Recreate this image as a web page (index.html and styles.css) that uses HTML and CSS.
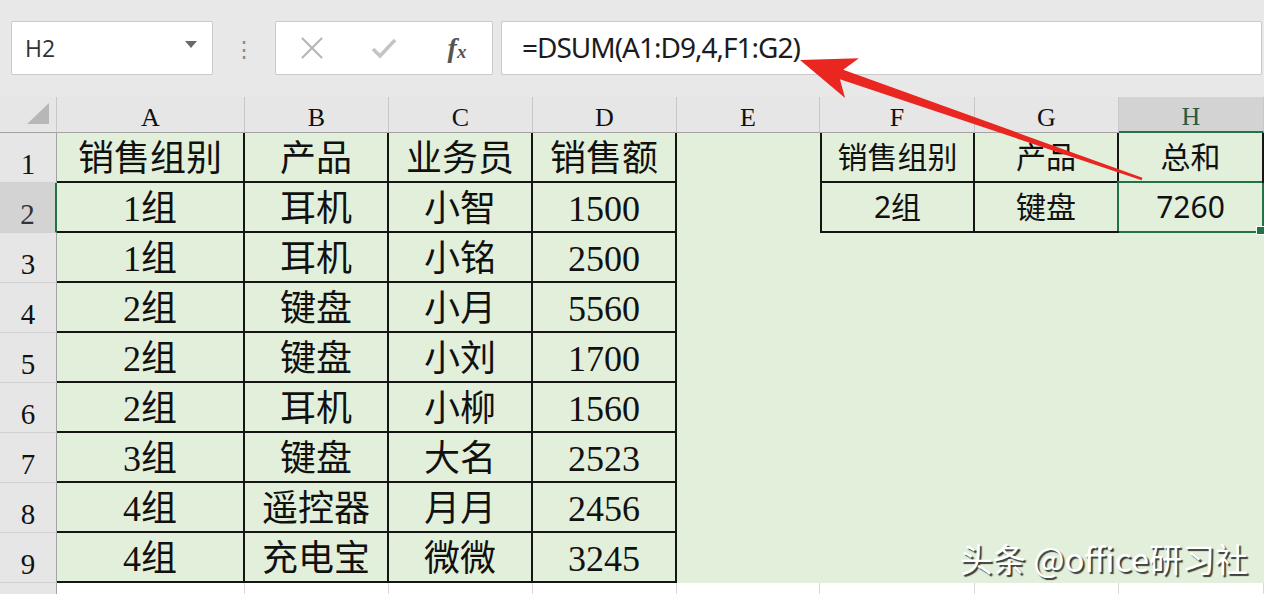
FILE: index.html
```html
<!DOCTYPE html>
<html lang="zh-CN">
<head>
  <meta charset="UTF-8">
  <title>DSUM</title>
  <link rel="stylesheet" href="styles.css">
</head>
<body>
  <div class="toolbar">
    <div class="namebox">
      <span>H2</span>
      <svg class="drop" width="12" height="8" viewBox="0 0 12 8"><polygon points="0,0 12,0 6,7" fill="#6a6a6a"/></svg>
    </div>
    <div class="grip">&#8942;</div>
    <div class="fxbox">
      <div class="slot">
        <svg width="24" height="24" viewBox="0 0 24 24"><path d="M2 2 L22 22 M22 2 L2 22" stroke="#b3b3b3" stroke-width="2" fill="none"/></svg>
      </div>
      <div class="slot">
        <svg width="26" height="22" viewBox="0 0 26 22"><path d="M2 12 L9 19 L24 3" stroke="#c4c4c4" stroke-width="3.5" fill="none"/></svg>
      </div>
      <div class="slot fx"><i>f</i><i class="x">x</i></div>
    </div>
    <div class="formula">=DSUM(A1:D9,4,F1:G2)</div>
  </div>

  <div class="sheet">
    <div class="corner"><svg width="22" height="22" viewBox="0 0 22 22"><polygon points="22,0 22,21 0,21" fill="#b7b7b7"/></svg></div>
    <div class="hd">A</div>
    <div class="hd">B</div>
    <div class="hd">C</div>
    <div class="hd">D</div>
    <div class="hd">E</div>
    <div class="hd">F</div>
    <div class="hd">G</div>
    <div class="hd hl">H</div>

    <div class="rn">1</div>
    <div class="g tb">销售组别</div>
    <div class="g tb">产品</div>
    <div class="g tb">业务员</div>
    <div class="g tb">销售额</div>
    <div class="g"></div>
    <div class="g tb f tl">销售组别</div>
    <div class="g tb f">产品</div>
    <div class="g tb f">总和</div>

    <div class="rn hl">2</div>
    <div class="g tb">1组</div>
    <div class="g tb">耳机</div>
    <div class="g tb">小智</div>
    <div class="g tb">1500</div>
    <div class="g"></div>
    <div class="g tb f tl">2组</div>
    <div class="g tb f">键盘</div>
    <div class="g tb f sel">7260</div>

    <div class="rn">3</div>
    <div class="g tb">1组</div>
    <div class="g tb">耳机</div>
    <div class="g tb">小铭</div>
    <div class="g tb">2500</div>
    <div class="g"></div><div class="g"></div><div class="g"></div><div class="g"></div>

    <div class="rn">4</div>
    <div class="g tb">2组</div>
    <div class="g tb">键盘</div>
    <div class="g tb">小月</div>
    <div class="g tb">5560</div>
    <div class="g"></div><div class="g"></div><div class="g"></div><div class="g"></div>

    <div class="rn">5</div>
    <div class="g tb">2组</div>
    <div class="g tb">键盘</div>
    <div class="g tb">小刘</div>
    <div class="g tb">1700</div>
    <div class="g"></div><div class="g"></div><div class="g"></div><div class="g"></div>

    <div class="rn">6</div>
    <div class="g tb">2组</div>
    <div class="g tb">耳机</div>
    <div class="g tb">小柳</div>
    <div class="g tb">1560</div>
    <div class="g"></div><div class="g"></div><div class="g"></div><div class="g"></div>

    <div class="rn">7</div>
    <div class="g tb">3组</div>
    <div class="g tb">键盘</div>
    <div class="g tb">大名</div>
    <div class="g tb">2523</div>
    <div class="g"></div><div class="g"></div><div class="g"></div><div class="g"></div>

    <div class="rn">8</div>
    <div class="g tb">4组</div>
    <div class="g tb">遥控器</div>
    <div class="g tb">月月</div>
    <div class="g tb">2456</div>
    <div class="g"></div><div class="g"></div><div class="g"></div><div class="g"></div>

    <div class="rn">9</div>
    <div class="g tb">4组</div>
    <div class="g tb">充电宝</div>
    <div class="g tb">微微</div>
    <div class="g tb">3245</div>
    <div class="g"></div><div class="g"></div><div class="g"></div><div class="g"></div>

    <div class="rn"></div>
    <div class="blank"></div><div class="blank"></div><div class="blank"></div><div class="blank"></div>
    <div class="blank"></div><div class="blank"></div><div class="blank"></div><div class="blank"></div>
  </div>

  <svg class="arrow" width="1264" height="594" viewBox="0 0 1264 594">
    <polygon fill="#e9261f" points="800,60 858.9,58.2 843.2,69.7 1142.4,177.8 1141.6,180.2 839.9,79.2 845.1,97.9"/>
  </svg>

  <div class="watermark">头条 @office研习社</div>
</body>
</html>
```

FILE: styles.css
```css
* {
  box-sizing: border-box;
}
body {
  margin: 0;
  width: 1264px;
  height: 594px;
  overflow: hidden;
  position: relative;
  background: #e8e8e8;
  font-family: "Noto Sans", "Noto Sans CJK SC", sans-serif;
  color: #111;
}
.toolbar {
  height: 97px;
  display: flex;
  align-items: flex-start;
  padding: 21px 0 0 11px;
}
.namebox {
  width: 202px;
  height: 54px;
  background: #fff;
  border: 1px solid #c9c9c9;
  border-radius: 2px;
  display: flex;
  align-items: center;
  justify-content: space-between;
  padding: 0 15px 0 13px;
  font-family: "Open Sans", sans-serif;
  font-size: 23px;
  color: #333;
}
.drop {
  margin-top: -6px;
}
.grip {
  width: 62px;
  text-align: center;
  line-height: 54px;
  font-size: 22px;
  color: #8a8a8a;
}
.fxbox {
  width: 218px;
  height: 54px;
  background: #fff;
  border: 1px solid #c9c9c9;
  border-radius: 2px;
  display: flex;
}
.slot {
  width: 72px;
  display: flex;
  align-items: center;
  justify-content: center;
}
.fx {
  font-family: "Liberation Serif", serif;
  font-size: 28px;
  font-weight: bold;
  color: #555;
  padding-left: 2px;
}
.fx .x {
  font-size: 19px;
  margin-top: 8px;
}
.formula {
  margin-left: 8px;
  width: 761px;
  height: 54px;
  background: #fff;
  border: 1px solid #c9c9c9;
  border-radius: 2px;
  padding-left: 20px;
  line-height: 50px;
  font-size: 28px;
  letter-spacing: -1px;
  color: #1c1c1c;
}
.sheet {
  display: grid;
  grid-template-columns: 57px 188px 144px 144px 144px 143px 155px 144px 145px;
  grid-template-rows: 36px repeat(9, 50px) 11px;
  font-family: "Liberation Serif", "Noto Sans CJK SC", serif;
}
.sheet > div {
  display: flex;
  align-items: center;
  justify-content: center;
  line-height: 1;
}
.corner {
  background: #e6e6e6;
  border-right: 1px solid #c8c8c8;
  border-bottom: 1px solid #a3a3a3;
  align-items: flex-end !important;
  justify-content: flex-end !important;
  padding: 0 7px 7px 0;
}
.hd {
  background: #e6e6e6;
  border-right: 1px solid #c8c8c8;
  border-bottom: 1px solid #a3a3a3;
  font-size: 26px;
  padding-top: 6px;
  color: #111;
}
.hd.hl {
  background: #d3d3d3;
  border-bottom: 2px solid #217346;
  color: #2a5a40;
}
.rn {
  background: #e6e6e6;
  border-right: 1px solid #a3a3a3;
  border-bottom: 1px solid #d0d0d0;
  font-size: 29px;
  padding-top: 14px;
  color: #111;
}
.rn.hl {
  background: #d3d3d3;
  border-right: 2px solid #217346;
  color: #333;
}
.g {
  background: #e2efda;
  font-size: 36px;
  padding-top: 3px;
}
.tb {
  border-right: 2px solid #151515;
  border-bottom: 2px solid #151515;
}
.tl {
  border-left: 2px solid #151515;
}
.f {
  font-family: "Noto Sans", "Noto Sans CJK SC", sans-serif;
  font-size: 30px;
  padding-top: 0;
}
.sel {
  position: relative;
  border-right-color: #217346;
  border-bottom-color: #217346;
  box-shadow: -2px -2px 0 #217346;
}
.sel::after {
  content: "";
  position: absolute;
  right: -3px;
  bottom: -4px;
  width: 7px;
  height: 7px;
  background: #217346;
  border: 1px solid #fff;
}
.blank {
  background: #fff;
  border-right: 1px solid #d9d9d9;
}
.arrow {
  position: absolute;
  top: 0;
  left: 0;
  pointer-events: none;
}
.watermark {
  position: absolute;
  top: 534px;
  right: 16px;
  font-family: "Noto Sans CJK SC", sans-serif;
  font-size: 33px;
  color: #fff;
  text-shadow: 2px 2px 1px rgba(0, 0, 0, 0.75);
}
```
